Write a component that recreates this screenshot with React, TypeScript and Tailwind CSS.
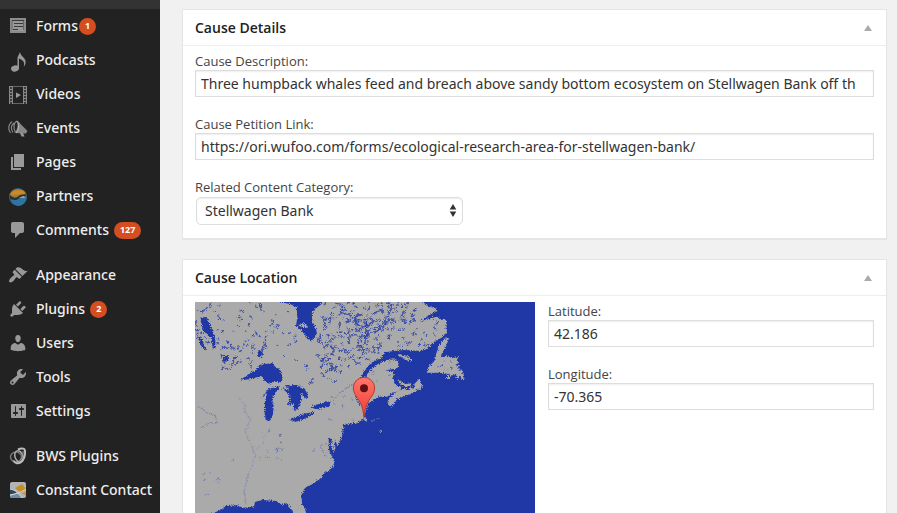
import {useId, useState} from "react";
import type {ReactNode} from "react";

const WATER = "#2038a6";
const LAND = "#aaaaaa";

type MenuItem = {
    label: string;
    icon: ReactNode;
    count?: number;
    tight?: boolean;
};

function Icon({children}: {children: ReactNode}) {
    return (
        <svg viewBox="0 0 20 20" className="size-5 shrink-0 overflow-visible" fill="#999" aria-hidden="true">
            {children}
        </svg>
    );
}

const menuGroups: MenuItem[][] = [
    [
        {
            label: "Forms",
            count: 1,
            tight: true,
            icon: (
                <Icon>
                    <path d="M2 2h16v15H2z" fill="#8c8c8c"/>
                    <path d="M4 5h12v10H4z" fill="#999"/>
                    <path d="M4 4h12v1H4zM6 7h9v1H6zM6 10h9v1H6zM5 13h5v1H5z" fill="#3a3a3a"/>
                    <path d="M4 5v9M15.500 5v9" stroke="#666" fill="none"/>
                </Icon>
            )
        },
        {
            label: "Podcasts",
            icon: (
                <Icon>
                    <ellipse cx="7" cy="18.5" rx="4" ry="3" transform="rotate(-15 7 18.5)"/>
                    <path d="M9.500 18.500V7.500L12 2c.3 2 1.200 3.300 3 5 2.500 2.300 3.300 4.500 2.200 7.500-.4 1-.8 1.500-1.400 2 .9-3.300.2-5.500-2.300-6.800L11 8.500v10z"/>
                </Icon>
            )
        },
        {
            label: "Videos",
            icon: (
                <Icon>
                    <path d="M1 2h4v18H1zM15 2h4v18h-4z" fill="#888"/>
                    <path d="M5 2.500h10M5 19.500h10" stroke="#666" fill="none"/>
                    <path
                        d="M2 4h2M2 7h2M2 10h2M2 13h2M2 16h2M2 19h2M16 4h2M16 7h2M16 10h2M16 13h2M16 16h2M16 19h2"
                        stroke="#222"
                        strokeWidth="1.500"
                    />
                    <path d="M8 8.500l5 2.500-5 3z"/>
                </Icon>
            )
        },
        {
            label: "Events",
            icon: (
                <Icon>
                    <path d="M4 3.500C.5 6-.5 11 2.500 15M6 5c-3 2-3.500 6-1 9.500M9 3c-3.500 1.500-4 7-1.500 11.500" fill="none" stroke="#888" strokeWidth="1.200"/>
                    <path d="M9.500 2.500c2 2.500 5.500 6 10 10.500l-1.500 2.500-11-.5C9.500 11 10 7 9.500 2.500z" fill="#888"/>
                    <path d="M12 15l1.500 3.500h3L15 15z" fill="#999"/>
                    <path d="M9 3c2.500 4.500 2 8.500-1 12" fill="none" stroke="#bbb"/>
                </Icon>
            )
        },
        {
            label: "Pages",
            icon: <Icon><path d="M6 15V2h10v13H6zm-1 1h8v2H3V5h2v11z"/></Icon>
        },
        {
            label: "Partners",
            icon: (
                <Icon>
                    <circle cx="10" cy="11" r="9" fill="#34607b"/>
                    <path d="M1.500 9A9 9 0 0 1 18.500 9L12 10 7 12z" fill="#b37c24"/>
                    <path d="M3 7c4-3 10-3 14-1v1.500L4 9z" fill="#c88d2b"/>
                    <path d="M2 9c3 4 7 3 10 0l6-1-1 3-5 1c-3 3-7 4-10 1z" fill="#26333d"/>
                    <path d="M2.500 13c4 2 7 1 9-1l7-1c0 5-3 8-8 9-4-1-7-3-8-7z" fill="#2f74a0"/>
                    <path d="M11 12l4-2 3 1-2 1z" fill="#a9a797"/>
                </Icon>
            )
        },
        {
            label: "Comments",
            count: 127,
            icon: (
                <Icon>
                    <path d="M5 2h9c1.100 0 2 .9 2 2v7c0 1.100-.9 2-2 2h-2l-5 5v-5H5c-1.100 0-2-.9-2-2V4c0-1.100.9-2 2-2z"/>
                </Icon>
            )
        }
    ],
    [
        {
            label: "Appearance",
            icon: (
                <Icon>
                    <path d="M14.480 11.060L7.410 3.990l1.500-1.500c.5-.56 2.300-.47 3.510.32 1.210.8 1.430 1.280 2.910 2.100 1.180.64 2.450 1.260 4.450.85zm-.71.71L6.700 4.700 4.930 6.470c-.39.39-.39 1.020 0 1.410l1.060 1.060c.39.39.39 1.030 0 1.420-.6.6-1.430 1.110-2.210 1.690-.35.26-.7.53-1.010.84C1.430 14.230.4 16.080 1.400 17.070c.99 1 2.840-.03 4.180-1.360.31-.31.58-.66.85-1.020.57-.78 1.080-1.610 1.690-2.210.39-.39 1.020-.39 1.410 0l1.060 1.060c.39.39 1.020.39 1.410 0z"/>
                </Icon>
            )
        },
        {
            label: "Plugins",
            count: 2,
            icon: (
                <Icon>
                    <path d="M13.110 4.360L9.870 7.600 8 5.730l3.240-3.240c.35-.34 1.050-.2 1.560.32.52.51.66 1.210.31 1.550zm-8 1.770l.91-1.120 9.010 9.010-1.190.84c-.71.71-2.630 1.160-3.820 1.160H6.140L4.900 17.260c-.59.59-1.540.59-2.120 0-.59-.58-.59-1.530 0-2.120l1.240-1.240v-3.880c0-1.130.4-3.190 1.090-3.890zm7.260 3.970l3.240-3.240c.34-.35 1.040-.21 1.550.31.52.51.66 1.210.31 1.550l-3.240 3.250z"/>
                </Icon>
            )
        },
        {
            label: "Users",
            icon: (
                <Icon>
                    <path d="M10 9.250c-2.270 0-2.730-3.440-2.730-3.440C7 4.020 7.820 2 9.970 2c2.160 0 2.980 2.020 2.710 3.810 0 0-.41 3.440-2.680 3.440zm0 2.570L12.720 10c2.390 0 4.520 2.330 4.520 4.530v2.490s-3.650 1.130-7.240 1.130c-3.650 0-7.240-1.130-7.240-1.130v-2.490c0-2.250 1.940-4.480 4.470-4.480z"/>
                </Icon>
            )
        },
        {
            label: "Tools",
            icon: (
                <Icon>
                    <path d="M16.680 9.770c-1.340 1.340-3.300 1.670-4.950.99l-5.410 6.520c-.99.99-2.590.99-3.580 0s-.99-2.590 0-3.570l6.520-5.420c-.68-1.650-.35-3.610.99-4.950 1.280-1.280 3.120-1.620 4.720-1.060l-2.890 2.890 2.820 2.820 2.860-2.870c.53 1.580.18 3.390-1.080 4.650zM3.810 16.210c.4.39 1.040.39 1.430 0 .4-.4.4-1.040 0-1.430-.39-.4-1.030-.4-1.430 0-.39.39-.39 1.030 0 1.430z"/>
                </Icon>
            )
        },
        {
            label: "Settings",
            icon: (
                <Icon>
                    <path d="M18 16V4c0-.55-.45-1-1-1H4c-.55 0-1 .45-1 1v12c0 .55.45 1 1 1h13c.55 0 1-.45 1-1zM8 11h1c.55 0 1 .45 1 1s-.45 1-1 1H8v1.500c0 .28-.22.5-.5.5s-.5-.22-.5-.5V13H6c-.55 0-1-.45-1-1s.45-1 1-1h1V5.500c0-.28.22-.5.5-.5s.5.22.5.5V11zm5-2h-1c-.55 0-1-.45-1-1s.45-1 1-1h1V5.500c0-.28.22-.5.5-.5s.5.22.5.5V7h1c.55 0 1 .45 1 1s-.45 1-1 1h-1v5.500c0 .28-.22.5-.5.5s-.5-.22-.5-.5V9z"/>
                </Icon>
            )
        }
    ],
    [
        {
            label: "BWS Plugins",
            icon: (
                <Icon>
                    <g fill="none">
                        <ellipse cx="8" cy="11" rx="5.500" ry="5" stroke="#777" strokeWidth="1.500"/>
                        <ellipse cx="11" cy="10.500" rx="4" ry="6" transform="rotate(-20 11 10.500)" stroke="#aaa" strokeWidth="1.500"/>
                        <path d="M10 3.500c3-1.500 6.500-1.500 7 1 .5 4-1 9-4.500 12-3 1.500-6 .5-7-2" stroke="#bbb" strokeWidth="2"/>
                        <path d="M15 5c.5 3-.5 7-3 9" stroke="#999"/>
                    </g>
                </Icon>
            )
        },
        {
            label: "Constant Contact",
            icon: (
                <Icon>
                    <rect x="2" y="2" width="16" height="16" rx="2" fill="#b4b4b4"/>
                    <path d="M7 8l7-4 4 5-5 4z" fill="#c68f25"/>
                    <path d="M2 9c2 0 5 1.500 7 4l-7 1.500z" fill="#24466b"/>
                    <path d="M2 16l8-2.500 4 4.500H4c-1 0-2-1-2-2z" fill="#7189aa"/>
                    <path d="M14 13.500l4-2.500v5z" fill="#b99a55"/>
                    <path d="M2 9c6 1 9 5 12 9M2 15c6-1 12-3 16-6" fill="none" stroke="#d4d4d4"/>
                </Icon>
            )
        }
    ]
];

const categories = ["Stellwagen Bank", "Coral Reefs", "Coastal Wetlands"];

// Small seeded generator, so that the lakes come out the same on every render.
function makeRandom(seed: number) {
    let s = seed;
    return () => {
        s = (s * 16807) % 2147483647;
        return s / 2147483647;
    };
}

// x, y, width, height, number of lakes, longest reach
const northernLakes = [
    [15, 20, 250, 150, 60, 10],
    [90, 140, 110, 75, 24, 10],
    [180, 20, 150, 180, 16, 9],
    [390, 20, 110, 110, 60, 18],
    [385, 130, 90, 90, 60, 10],
    [350, 200, 100, 60, 14, 8],
    [460, 100, 80, 90, 22, 14],
    [500, 20, 110, 90, 70, 20],
    [500, 90, 70, 80, 34, 16],
    [600, 20, 80, 60, 30, 12],
    [600, 80, 140, 70, 24, 8]
];

const southernLakes = [
    [520, 200, 90, 90, 10, 7],
    [200, 400, 80, 130, 16, 7],
    [410, 300, 110, 90, 8, 7],
    [30, 490, 120, 110, 8, 6],
    [370, 440, 50, 50, 8, 8]
];

// Each lake is a short bent shoreline drawn out from a random point.
function buildLakes(fields: number[][], seed: number) {
    const random = makeRandom(seed);
    let d = "";

    for (const [x, y, w, h, count, reach] of fields) {
        for (let i = 0; i < count; i++) {
            const px = Math.round(x + random() * w);
            const py = Math.round(y + random() * h);
            const angle = random() * Math.PI * 2;
            const length = 2 + random() * random() * reach;
            const turn = angle + (random() - 0.5) * 2;
            const ax = Math.round(Math.cos(angle) * length);
            const ay = Math.round(Math.sin(angle) * length);
            const bx = Math.round(Math.cos(turn) * length);
            const by = Math.round(Math.sin(turn) * length);
            d += `M${px} ${py}l${ax} ${ay}l${bx} ${by}l${2 - bx} ${1 - by}z`;
        }
    }

    return d;
}

const northPath = buildLakes(northernLakes, 4217);
const southPath = buildLakes(southernLakes, 911);

function Map() {
    return (
        <svg
            viewBox="15 18 1020 900"
            className="aspect-[340/300] w-[340px] shrink-0"
            role="img"
            aria-label="Map of the cause location"
        >
            <defs>
                <filter id="coast" x="0" y="0" width="1" height="1" colorInterpolationFilters="sRGB">
                    <feTurbulence type="fractalNoise" baseFrequency="0.3" numOctaves="3" seed="8"/>
                    <feDisplacementMap in="SourceGraphic" scale="14" xChannelSelector="R" yChannelSelector="G"/>
                </filter>
                <linearGradient id="pin" x1="0" y1="0" x2="0" y2="1">
                    <stop offset="0" stopColor="#ff776b"/>
                    <stop offset="1" stopColor="#f23a33"/>
                </linearGradient>
            </defs>
            <rect x="15" y="18" width="1020" height="900" fill={LAND}/>
            <g filter="url(#coast)">
                <rect x="-5" y="-2" width="1060" height="940" fill={LAND}/>
                <path d={northPath} fill={WATER} stroke={WATER} strokeWidth="2" opacity="0.85"/>
                <path d={southPath} fill={WATER} stroke={WATER} opacity="0.5"/>
                <g fill={WATER}>
                    {/* Atlantic */}
                    <path d="M690 0L698 18 715 30 740 38 742 46 728 52 710 62 690 77 715 68 742 62 750 70 768 72 771 112 755 125 735 135 720 152 695 165 640 162 585 168 572 188 550 195 532 212 512 245 520 248 545 218 565 203 590 192 615 190 626 200 623 218 605 220 585 224 608 226 612 234 608 245 615 265 635 277 628 285 605 291 592 302 565 302 550 312 535 320 528 345 521 362 531 370 530 378 520 370 500 382 475 388 458 400 456 420 444 445 432 460 427 480 433 500 427 515 405 530 390 548 362 568 345 576 333 600 336 622 345 640 354 670 380 720 388 760 378 790 365 780 345 740 325 700 318 665 306 642 290 622 275 626 260 615 215 612 195 618 192 632 160 635 140 628 108 630 92 642 60 655 30 690 18 740 25 800 50 850 60 940 1060 940 1060 0z"/>
                    {/* James Bay */}
                    <path d="M268 5L268 18 300 24 320 34 322 65 318 90 333 102 345 117 360 136 372 128 381 115 378 98 367 75 365 50 375 38 390 28 395 18 400 5z"/>
                    {/* Lake Winnipeg */}
                    <path d="M30 65L50 63 60 85 70 110 76 130 76 155 68 158 65 130 50 115 38 105 35 85zM22 118L32 124 40 142 48 163 40 161 30 142z"/>
                    {/* Great Lakes */}
                    <path d="M152 252L170 238 197 222 210 206 230 203 248 202 258 216 268 218 278 245 275 259 250 257 237 263 220 252 218 240 195 246 180 250z"/>
                    <path d="M224 352L225 315 232 290 214 308 235 278 270 271 268 280 255 290 246 310 251 328 249 355 240 374 228 374z"/>
                    <path d="M275 276L300 281 284 268 320 267 345 278 357 305 345 305 334 290 333 310 325 340 312 341 308 318 300 328 290 326 300 310 297 295z"/>
                    <path d="M298 372L306 366 322 361 350 352 375 347 367 357 340 370 315 378z"/>
                    <path d="M362 335L378 326 400 322 406 316 422 319 417 332 395 335 385 340z"/>
                    <path d="M203 168L212 162 219 172 216 184 205 184zM96 192L103 180 118 178 112 195 104 200z"/>
                    {/* Chesapeake and Long Island Sound */}
                    <path d="M416 425L425 430 424 455 432 473 424 480 417 460zM435 430L442 450 433 455zM458 388L495 380 497 385 460 396z"/>
                </g>
                <g fill="none" stroke={WATER}>
                    <path d="M422 315L452 290 478 270 512 248" strokeWidth="2" opacity="0.5"/>
                    <path d="M512 248L540 212" strokeWidth="5"/>
                    <path d="M145 305L165 325 164 345 182 370 165 405 180 440 198 480 183 515 170 550 163 590 168 625" strokeWidth="2" opacity="0.3"/>
                    <path d="M25 330L50 350 75 358 82 380 60 380 32 398" strokeWidth="2" opacity="0.45"/>
                    <path d="M198 460L218 445 227 415 245 395" strokeWidth="1" opacity="0.35"/>
                    <path d="M527 235L530 275M497 300L510 330M530 75L525 140" strokeWidth="3"/>
                </g>
                <g fill={LAND}>
                    {/* Nova Scotia, Prince Edward Island, Anticosti */}
                    <path d="M592 318L605 298 622 286 640 280 660 278 680 276 684 281 668 292 650 298 622 308 610 326 600 332z"/>
                    <path d="M673 264L688 248 692 264 700 268 690 282 674 278zM624 244L632 258 648 264 665 262 660 272 640 270 628 262z"/>
                    <path d="M622 174L645 178 670 191 655 194 638 187z"/>
                    {/* Newfoundland */}
                    <path d="M762 128L777 126 768 150 757 170 750 184 762 182 770 176 773 186 782 181 786 187 805 183 800 192 808 200 796 206 808 212 804 222 812 226 810 220 818 226 816 236 822 235 820 252 814 248 812 238 806 250 798 248 800 240 794 234 784 240 772 250 768 246 780 234 750 230 710 230 716 214 732 196 746 150z"/>
                    <path d="M545 373L572 364 573 366 548 375z" opacity="0.4"/>
                    <path d="M564 404L576 401 572 408zM325 85L340 81 354 92 346 97 332 91z"/>
                </g>
                {/* Newfoundland lakes */}
                <path d="M758 192l8 4-3 3zM775 196l10-3 1 4zM750 208l12-2-4 5zM782 212l7 3-5 4zM738 216l6-6 2 4zM765 218l8 2-4 3z" fill={WATER} opacity="0.7"/>
            </g>
            <path
                d="M522 364C518 334 514 323 503 307 495 296 490 288 490 276a32 32 0 0 1 64 0c0 12-5 20-13 31-11 16-15 27-19 57z"
                fill="url(#pin)"
                stroke="#b33a35"
                strokeWidth="3"
            />
            <circle cx="522" cy="277" r="12" fill="#5f120f"/>
        </svg>
    );
}

function Sidebar() {
    return (
        <nav aria-label="Admin menu" className="w-40 shrink-0 bg-[#222]">
            <div className="h-[9px] bg-[#333]"/>
            <div className="flex flex-col gap-[11px]">
                {menuGroups.map((group) => (
                    <ul key={group[0].label}>
                        {group.map((item) => (
                            <li key={item.label}>
                                <a
                                    href="#"
                                    className="flex h-[34px] items-center gap-2 pl-2 font-['Noto_Sans',sans-serif] text-sm font-medium whitespace-nowrap text-[#eee] hover:text-[#2ea2cc]"
                                >
                                    {item.icon}
                                    <span className={`flex items-center ${item.tight ? "gap-px" : "gap-[5px]"}`}>
                                        {item.label}
                                        {item.count !== undefined && (
                                            <span className="flex h-[17px] min-w-[17px] items-center justify-center rounded-full bg-[#d54e21] px-[6px] text-[9px] font-bold text-white">
                                                {item.count}
                                            </span>
                                        )}
                                    </span>
                                </a>
                            </li>
                        ))}
                    </ul>
                ))}
            </div>
        </nav>
    );
}

function Panel({title, children}: {title: string; children: ReactNode}) {
    const [open, setOpen] = useState(true);

    return (
        <section className="border border-[#e5e5e5] bg-white shadow-[0_1px_1px_rgba(0,0,0,0.04)]">
            <div className="flex h-9 items-center justify-between border-b border-[#eee] pr-[13px] pl-3">
                <h2 className="text-sm font-semibold text-[#222]">{title}</h2>
                <button type="button" aria-label={`Toggle ${title}`} aria-expanded={open} onClick={() => setOpen(!open)}>
                    <svg viewBox="0 0 10 8" className="h-2 w-[10px]" fill="#aaa" aria-hidden="true">
                        <path d="M5 1l4 6H1z"/>
                    </svg>
                </button>
            </div>
            {open && <div className="px-3 pt-[6px] pb-[13px]">{children}</div>}
        </section>
    );
}

function TextField({label, value}: {label: string; value: string}) {
    const id = useId();

    return (
        <div className="flex flex-col">
            <label htmlFor={id} className="text-[13px] leading-[18px] text-[#444]">{label}</label>
            <input
                id={id}
                type="text"
                defaultValue={value}
                className="h-[27px] w-full border border-[#ddd] bg-white px-[5px] font-['Noto_Sans',sans-serif] text-sm text-[#333] shadow-[inset_0_1px_2px_rgba(0,0,0,0.07)] outline-none focus:border-[#5b9dd9]"
            />
        </div>
    );
}

export default function App() {
    return (
        <div className="flex h-screen overflow-hidden bg-[#f1f1f1] font-['Open_Sans',sans-serif]">
            <Sidebar/>
            <main className="flex min-w-0 flex-1 flex-col gap-5 pt-[9px] pr-[10px] pl-[22px]">
                <Panel title="Cause Details">
                    <div className="flex flex-col gap-[18px]">
                        <TextField
                            label="Cause Description:"
                            value="Three humpback whales feed and breach above sandy bottom ecosystem on Stellwagen Bank off th"
                        />
                        <TextField
                            label="Cause Petition Link:"
                            value="https://ori.wufoo.com/forms/ecological-research-area-for-stellwagen-bank/"
                        />
                        <div className="flex flex-col gap-px">
                            <label htmlFor="category" className="text-[13px] leading-[18px] text-[#444]">
                                Related Content Category:
                            </label>
                            <div className="relative ml-px w-[267px]">
                                <select
                                    id="category"
                                    className="h-7 w-full appearance-none rounded-[5px] border border-[#ddd] bg-white pr-6 pl-2 font-['Noto_Sans',sans-serif] text-sm text-[#333] shadow-[inset_0_1px_2px_rgba(0,0,0,0.07)] outline-none"
                                >
                                    {categories.map((name) => (
                                        <option key={name}>{name}</option>
                                    ))}
                                </select>
                                <svg
                                    viewBox="0 0 8 14"
                                    className="pointer-events-none absolute top-[7px] right-[6px] h-[14px] w-2"
                                    fill="#333"
                                    aria-hidden="true"
                                >
                                    <path d="M4 0l3.300 5.500H.7zM4 13L.7 7.500h6.600z"/>
                                </svg>
                            </div>
                        </div>
                    </div>
                </Panel>

                <Panel title="Cause Location">
                    <div className="flex items-start gap-[13px]">
                        <Map/>
                        <div className="flex min-w-0 flex-1 flex-col gap-[18px]">
                            <TextField label="Latitude:" value="42.186"/>
                            <TextField label="Longitude:" value="-70.365"/>
                        </div>
                    </div>
                </Panel>
            </main>
        </div>
    );
}
